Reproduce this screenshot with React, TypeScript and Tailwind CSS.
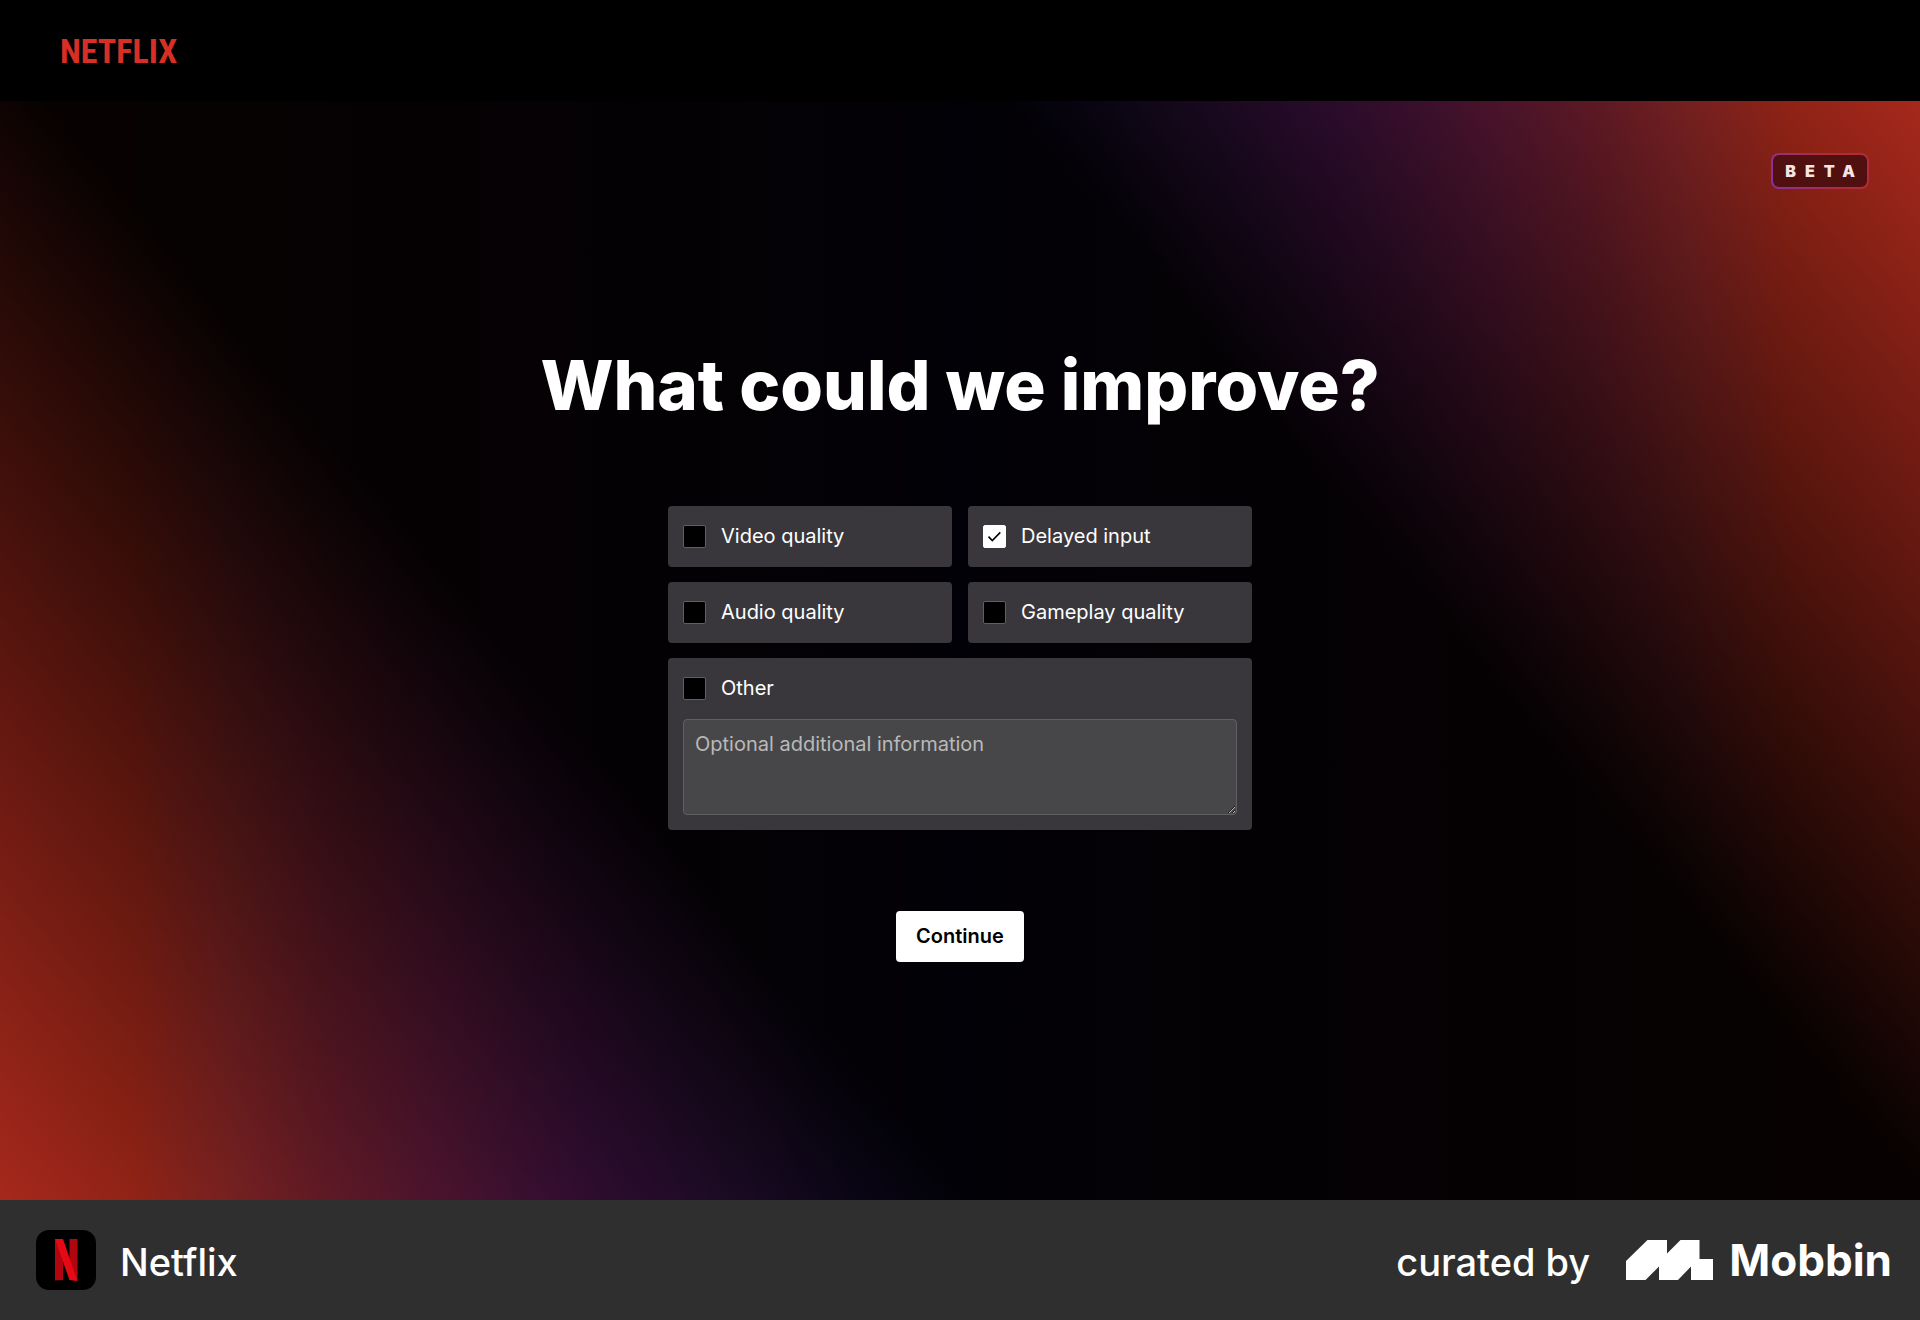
import { useState } from "react";

const initialOptions = [
  { id: "video", label: "Video quality", checked: false },
  { id: "delay", label: "Delayed input", checked: true },
  { id: "audio", label: "Audio quality", checked: false },
  { id: "gameplay", label: "Gameplay quality", checked: false },
];

function CheckRow({ id, label, defaultChecked = false }: { id: string; label: string; defaultChecked?: boolean }) {
  const [checked, setChecked] = useState(defaultChecked);
  return (
    <label htmlFor={id} className="flex h-[61px] cursor-pointer items-center gap-[15px] px-[15px] text-xl text-white">
      <span className="relative grid size-[23px] shrink-0 place-items-center">
        <input
          id={id}
          type="checkbox"
          checked={checked}
          onChange={(e) => setChecked(e.target.checked)}
          className="size-[23px] appearance-none rounded-xs border border-[#5f5e61] bg-black checked:border-white checked:bg-white"
        />
        {checked && (
          <svg viewBox="0 0 23 23" className="pointer-events-none absolute inset-0" fill="none" stroke="#000" strokeWidth="1.6" aria-hidden="true">
            <path d="M5.5 11.6l3.8 3.9 8-8.1" />
          </svg>
        )}
      </span>
      {label}
    </label>
  );
}

function NetflixIcon() {
  return (
    <svg viewBox="0 0 60 60" className="size-[60px]" role="img" aria-label="Netflix app icon">
      <rect width="60" height="60" rx="13" fill="#000" />
      <path d="M19 9h8v41l-8 .5z" fill="#b1060f" />
      <path d="M33.500 9h8v42l-8-1z" fill="#b1060f" />
      <path d="M19 9h8l14.500 42q-4-.8-8-1z" fill="#e50914" />
    </svg>
  );
}

function MobbinIcon() {
  return (
    <svg viewBox="0 0 87 40" className="h-10 w-[87px]" fill="#fff" aria-hidden="true">
      <path d="M0 21L21.500 0H41v13.500L54.500 0h19v19H87v21H65V26.500L52 40H33V26.500L19.500 40H0z" />
    </svg>
  );
}

export default function App() {
  return (
    <div className="flex min-h-screen flex-col bg-black font-['Inter',sans-serif]">
      <header className="flex h-[101px] items-center bg-black px-[60px]">
        <a href="#" className="font-['Roboto_Condensed','Open_Sans_Condensed','Liberation_Sans_Narrow',sans-serif] text-[34px] leading-10 font-bold text-[#d72f26]">
          NETFLIX
        </a>
      </header>

      <main className="relative flex flex-1 flex-col items-center justify-center bg-[linear-gradient(50deg,rgba(0,0,0,0)_0%,rgba(0,0,0,0.96)_34%,rgba(0,0,0,0.96)_68%,rgba(0,0,0,0)_100%),linear-gradient(to_right,#a6281c_0%,#a62819_7%,#992a2a_12%,#8c2536_17%,#832250_23%,#701e72_31%,#602680_39%,#482490_44%,#3820a8_50%,#482490_56%,#602680_61%,#701e72_69%,#832250_77%,#8c2536_83%,#992a2a_88%,#a62819_93%,#a6281c_100%)]">
        <div className="absolute top-[52px] right-[51px] rounded-lg bg-[linear-gradient(60deg,#8a2fa8,#b02c3c_60%,#b02c3c)] p-[2px]">
          <div className="h-8 rounded-md bg-[#4f100f] pr-[3px] pl-[12px] text-[16px] leading-8 font-black tracking-[9px] text-[#f5e4e4]">
            BETA
          </div>
        </div>

        <h1 className="mb-[76px] text-[69px] leading-[90px] font-extrabold text-white">What could we improve?</h1>

        <form className="flex flex-col items-center" onSubmit={(e) => e.preventDefault()}>
          <div className="grid w-[584px] grid-cols-2 gap-x-4 gap-y-[15px]">
            {initialOptions.map((o) => (
              <div key={o.id} className="rounded-sm bg-[#39373b]">
                <CheckRow id={o.id} label={o.label} defaultChecked={o.checked} />
              </div>
            ))}
            <div className="col-span-2 rounded-sm bg-[#39373b]">
              <CheckRow id="other" label="Other" />
              <div className="px-[15px] pb-[15px]">
                <textarea
                  aria-label="Optional additional information"
                  placeholder="Optional additional information"
                  className="block h-24 w-full rounded-sm border border-[#5f5f62] bg-[#474749] px-[11px] py-2.5 text-xl leading-7 text-white placeholder:text-[#b9b9ba]"
                />
              </div>
            </div>
          </div>
          <button type="submit" className="mt-[81px] h-[51px] rounded-sm bg-white px-5 text-xl font-semibold text-black">
            Continue
          </button>
        </form>
      </main>

      <footer className="flex h-[120px] items-center justify-between bg-[#2f2f2f] pr-7 pl-9 text-white">
        <div className="flex items-center gap-6">
          <NetflixIcon />
          <span className="pt-1 text-[38px] leading-[60px] font-medium">Netflix</span>
        </div>
        <div className="flex items-center">
          <span className="pt-1 text-[38px] leading-[60px] font-medium">curated by</span>
          <a href="#" className="ml-9 flex items-center gap-4">
            <MobbinIcon />
            <span className="text-[44px] leading-[60px] font-bold">Mobbin</span>
          </a>
        </div>
      </footer>
    </div>
  );
}
